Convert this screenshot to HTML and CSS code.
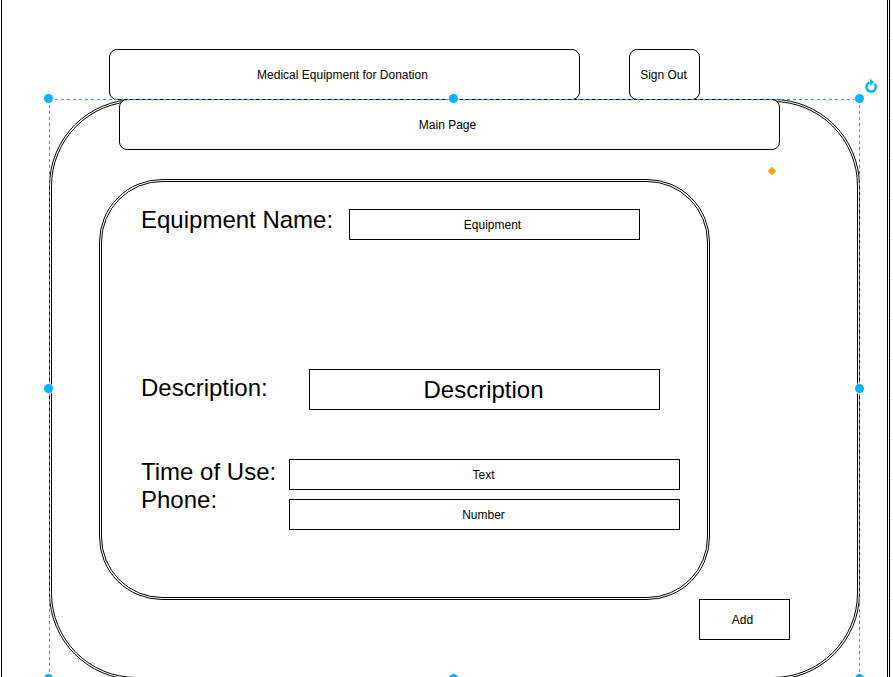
FILE: index.html
```html
<!DOCTYPE html>
<html lang="en">
<head>
<meta charset="utf-8">
<meta name="viewport" content="width=device-width, initial-scale=1">
<title>Medical Equipment for Donation</title>
<link rel="stylesheet" href="styles.css">
</head>
<body>
<div class="page">
  <header class="top">
    <h1 class="box rounded title">Medical Equipment for Donation</h1>
    <button class="box rounded sign-out" type="button">Sign Out</button>
  </header>
  <main class="frame">
    <h2 class="box rounded main-bar">Main Page</h2>
    <form class="panel">
      <div class="row row-name">
        <label for="name">Equipment Name:</label>
        <input class="box" id="name" type="text" value="Equipment">
      </div>
      <div class="row row-description">
        <label for="description">Description:</label>
        <input class="box large" id="description" type="text" value="Description">
      </div>
      <div class="row row-time">
        <label for="time">Time of Use:</label>
        <input class="box" id="time" type="text" value="Text">
      </div>
      <div class="row row-phone">
        <label for="phone">Phone:</label>
        <input class="box" id="phone" type="text" value="Number">
      </div>
    </form>
    <button class="box add" type="button">Add</button>
    <div class="selection">
      <span class="handle n w"></span>
      <span class="handle n center"></span>
      <span class="handle n e"></span>
      <span class="handle middle w"></span>
      <span class="handle middle e"></span>
      <span class="handle s w"></span>
      <span class="handle s center"></span>
      <span class="handle s e"></span>
      <svg class="rotate" viewBox="0 0 14 16" aria-hidden="true">
        <path d="M10.4 5.6A4.7 4.7 0 1 1 5.6 4.5" fill="none" stroke="#00b4ff" stroke-width="2.4"/>
        <path d="M5.8 .8L10.2 4.3L6.4 8Z" fill="#00b4ff"/>
      </svg>
      <svg class="diamond" viewBox="0 0 8 8" aria-hidden="true">
        <path d="M4 0L8 4L4 8L0 4Z" fill="#ffa000" stroke="#ffa000" stroke-width=".6"/>
      </svg>
    </div>
  </main>
</div>
</body>
</html>
```
FILE: styles.css
```css
* {
  box-sizing: border-box;
}

body {
  height: 100vh;
  margin: 0;
  overflow: hidden;
  color: #000;
  font-family: "Liberation Sans", Arial, sans-serif;
  font-size: 12px;
  /* canvas grid, visible only outside the page */
  background: repeating-linear-gradient(#fff 0 39px, #e8e8e8 39px 40px);
}

.page {
  min-height: 100vh;
  margin: 0 3px 0 0;
  padding-top: 49px;
  background: #fff;
  border-right: 3px double #000;
  box-shadow: inset 1px 0 #fff, inset 2px 0 #000;
}

.box {
  display: flex;
  align-items: center;
  justify-content: center;
  margin: 0;
  padding: 0 4px 0 0;
  color: #000;
  font: inherit;
  text-align: center;
  background: #fff;
  border: 1px solid #000;
  border-radius: 0;
}

.rounded {
  height: 51px;
  border-radius: 8px;
}

.top {
  display: flex;
  gap: 49px;
  margin: 0 187px -1px 109px;
}

.title {
  flex: 1;
}

.sign-out {
  width: 71px;
  padding: 0 2px 0 0;
}

.frame {
  position: relative;
  margin: 0 27px 0 49px;
  padding-bottom: 37px;
  border: 3px double #000;
  border-radius: 87px;
}

.main-bar {
  margin: -3px 77px 0 67px;
}

.panel {
  margin: 29px 147px 0 47px;
  padding: 24px 0 0 39px;
  border: 3px double #000;
  border-radius: 63px;
}

.row {
  display: flex;
  align-items: flex-start;
}

.row label {
  flex: none;
  font-size: 24px;
  line-height: 28px;
  white-space: nowrap;
}

.row input {
  flex: 1;
  min-width: 0;
  height: 31px;
}

.row-name {
  height: 163px;
  padding-right: 67px;
}

.row-name label {
  width: 208px;
}

.row-name input {
  margin-top: 3px;
}

.row-description {
  height: 89px;
  padding-right: 47px;
}

.row-description label {
  width: 168px;
  padding-top: 5px;
}

.row .large {
  height: 41px;
  padding: 0 2px 0 0;
  font-size: 24px;
}

.row-time,
.row-phone {
  padding-right: 27px;
}

.row-time {
  height: 28px;
}

.row-time label,
.row-phone label {
  width: 148px;
}

.row-time input,
.row-phone input {
  padding-right: 2px;
}

.row-time input {
  margin-top: 1px;
}

.row-phone {
  height: 111px;
}

.row-phone input {
  margin-top: 13px;
}

.add {
  width: 91px;
  height: 41px;
  margin: -1px 67px 0 auto;
}

.selection {
  --across: repeating-linear-gradient(90deg, #1a9cff 0 3px, transparent 3px 6px);
  --down: repeating-linear-gradient(#1a9cff 0 3px, transparent 3px 6px);
  position: absolute;
  inset: -3px;
  pointer-events: none;
  background:
    var(--across) top / 100% 1px no-repeat,
    var(--across) bottom / 100% 1px no-repeat,
    var(--down) left / 1px 100% no-repeat,
    var(--down) right / 1px 100% no-repeat;
}

.handle {
  position: absolute;
  width: 9px;
  height: 9px;
  background: #00b4ff;
  border-radius: 50%;
  box-shadow: 0 0 0 1px rgba(255, 255, 255, 0.7);
}

.n {
  top: -5px;
}

.s {
  bottom: -3px;
}

.w {
  left: -5px;
}

.e {
  right: -4px;
}

.center {
  left: calc(50% - 6px);
}

.middle {
  top: calc(50% - 6px);
}

.rotate {
  position: absolute;
  top: -21px;
  right: -18px;
  width: 14px;
  height: 16px;
}

.diamond {
  position: absolute;
  top: 68px;
  right: 84px;
  width: 8px;
  height: 8px;
}
```
